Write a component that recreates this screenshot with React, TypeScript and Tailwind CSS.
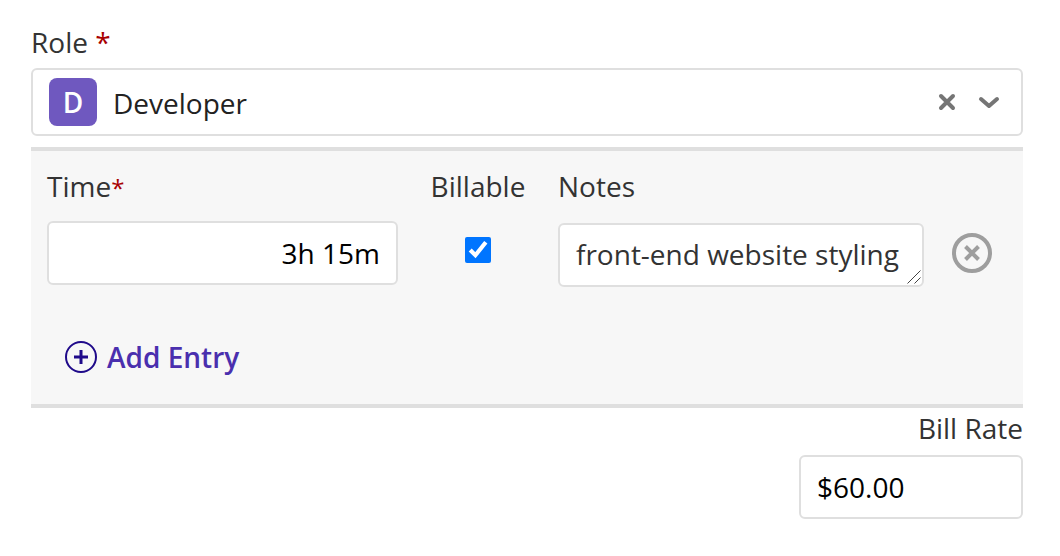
import { useState } from "react";

const fieldClass =
  "h-16 w-full min-w-0 rounded-md border-2 border-[#dfdfdf] bg-white px-4 text-[28px] leading-10 outline-none focus:border-[#6f58bf]";

export default function App() {
  const [role, setRole] = useState("Developer");
  const [time, setTime] = useState("3h 15m");
  const [billable, setBillable] = useState(true);
  const [notes, setNotes] = useState("front-end website styling");
  const [rate, setRate] = useState("$60.00");

  return (
    <form
      className="bg-white pt-[22px] pr-[37px] pb-9 pl-[31px] font-['Open_Sans','Noto_Sans',sans-serif] text-[28px] leading-10 text-[#333]"
      onSubmit={(e) => e.preventDefault()}
    >
      <label htmlFor="role" className="block">
        Role <span className="text-[#a80000]">*</span>
      </label>
      <div className="mt-1.5 flex h-[68px] items-center rounded-md border-2 border-[#dfdfdf] bg-white pr-5 pl-4">
        <span
          aria-hidden="true"
          className="flex size-12 shrink-0 items-center justify-center rounded-lg bg-[#6f58bf] font-semibold text-white"
        >
          {role.charAt(0)}
        </span>
        <select
          id="role"
          value={role}
          onChange={(e) => setRole(e.target.value)}
          className="ml-4 min-w-0 flex-1 appearance-none bg-transparent pt-0.5 text-[#222] outline-none"
        >
          <option value="" />
          <option value="Developer">Developer</option>
        </select>
        <button type="button" aria-label="Clear role" onClick={() => setRole("")}>
          <svg className="size-5" viewBox="0 0 20 20" fill="none" stroke="#757575" strokeWidth="4" strokeLinecap="round">
            <path d="M4 4l12 12M16 4L4 16" />
          </svg>
        </button>
        <svg
          aria-hidden="true"
          className="ml-5 h-5 w-6"
          viewBox="0 0 24 20"
          fill="none"
          stroke="#757575"
          strokeWidth="4"
          strokeLinecap="round"
          strokeLinejoin="round"
        >
          <path d="M4 7l8 7 8-7" />
        </svg>
      </div>

      <div className="mt-[11px] border-y-4 border-[#dfdfdf] bg-[#f7f7f7] pt-[15px] pr-[31px] pb-[27px] pl-4">
        <div className="grid grid-cols-[351fr_96px_366fr_36px] items-start gap-x-8 gap-y-[15px]">
          <label htmlFor="time">
            Time<span className="text-2xl text-[#a80000]">*</span>
          </label>
          <label htmlFor="billable" className="text-center">
            Billable
          </label>
          <label htmlFor="notes">Notes</label>
          <span />

          <input
            id="time"
            value={time}
            onChange={(e) => setTime(e.target.value)}
            className={`${fieldClass} text-right text-black`}
          />
          <input
            id="billable"
            type="checkbox"
            checked={billable}
            onChange={(e) => setBillable(e.target.checked)}
            className="mt-4 size-[26px] justify-self-center accent-[#0075ff]"
          />
          <div className="relative mt-0.5">
            <textarea
              id="notes"
              rows={1}
              value={notes}
              onChange={(e) => setNotes(e.target.value)}
              className={`${fieldClass} block resize-none overflow-hidden py-[9px]`}
            />
            <svg
              aria-hidden="true"
              className="pointer-events-none absolute right-[3px] bottom-[3px] size-[14px]"
              viewBox="0 0 14 14"
              fill="none"
              stroke="#444"
            >
              <path d="M.5 13.5l13-13M7.5 13.5l6-6" />
            </svg>
          </div>
          <button type="button" aria-label="Remove entry" className="mt-3 size-10 justify-self-end">
            <svg className="size-10" viewBox="0 0 40 40" fill="none" stroke="#9e9e9e" strokeWidth="4">
              <circle cx="20" cy="20" r="18" />
              <path d="M13.5 13.5l13 13M26.5 13.5l-13 13" />
            </svg>
          </button>
        </div>

        <button
          type="button"
          className="mt-[50px] ml-[18px] flex items-center gap-[10px] font-semibold text-[#4a2fae]"
        >
          <svg className="size-8" viewBox="0 0 32 32" fill="none" stroke="#1f0a8a">
            <circle cx="16" cy="16" r="15" strokeWidth="2" />
            <path d="M16 9v14M9 16h14" strokeWidth="3" />
          </svg>
          Add Entry
        </button>
      </div>

      <div className="ml-auto w-56">
        <label htmlFor="rate" className="block text-right">
          Bill Rate
        </label>
        <input
          id="rate"
          value={rate}
          onChange={(e) => setRate(e.target.value)}
          className={`${fieldClass} mt-[7px] block text-black`}
        />
      </div>
    </form>
  );
}
